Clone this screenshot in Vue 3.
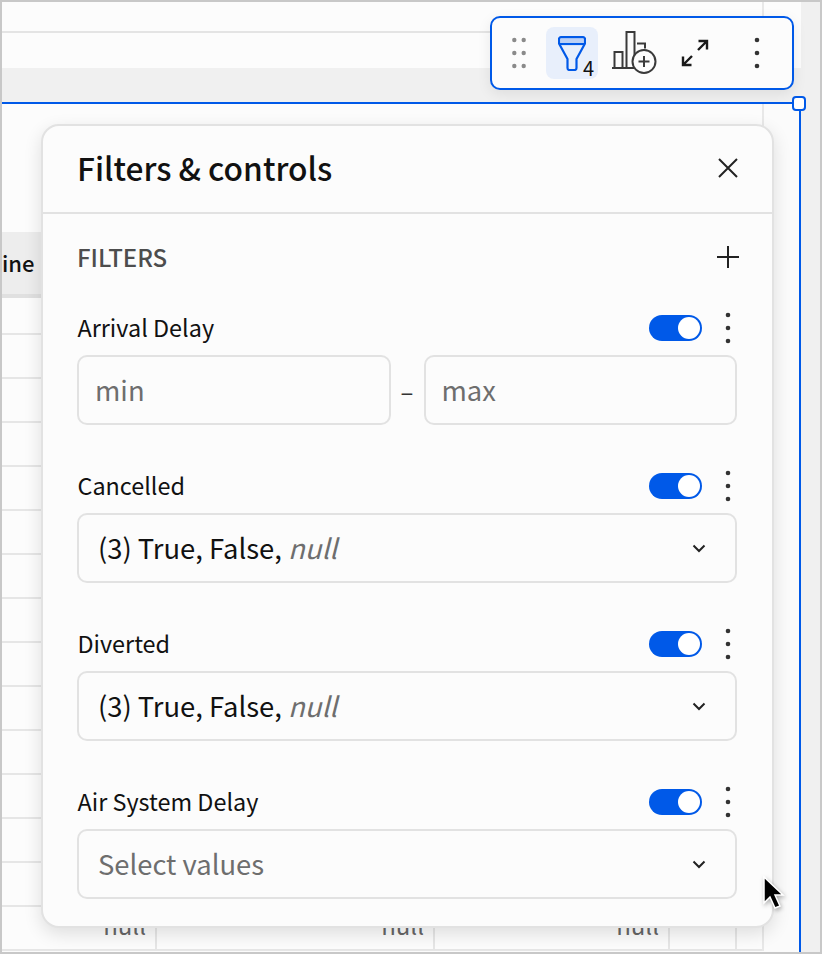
<script setup>
const filters = [
  { name: 'Cancelled', values: '(3) True, False,', nul: 'null' },
  { name: 'Diverted', values: '(3) True, False,', nul: 'null' },
  { name: 'Air System Delay', placeholder: 'Select values' },
]
const rows = Array.from({ length: 14 })
</script>

<template>
  <div class="page">
    <div class="main">
      <div class="top-strip">
        <div class="top-row"></div>
        <div class="top-row2"></div>
        <div class="top-band"></div>
      </div>
      <div class="table">
        <div class="rows">
          <div class="spacer"></div>
          <div class="head"><span>ine</span></div>
          <div v-for="(r, i) in rows" :key="i" class="row" :class="{ first: i == 0 }">
            <span class="cell c1"></span>
            <span class="cell c2"></span>
            <span class="cell c3"></span>
            <span class="cell c4"></span>
          </div>
          <div class="row last">
            <span class="cell c1">null</span>
            <span class="cell c2">null</span>
            <span class="cell c3">null</span>
            <span class="cell c4"></span>
          </div>
        </div>
      </div>
    </div>
    <div class="gutter"></div>

    <span class="handle"></span>

    <div class="toolbar">
      <svg class="drag" width="16" height="32" viewBox="0 0 16 32">
        <g fill="#8a8a8a">
          <circle cx="3.3" cy="3" r="2.2" /><circle cx="12.7" cy="3" r="2.2" />
          <circle cx="3.3" cy="16" r="2.2" /><circle cx="12.7" cy="16" r="2.2" />
          <circle cx="3.3" cy="29" r="2.2" /><circle cx="12.7" cy="29" r="2.2" />
        </g>
      </svg>
      <div class="tool active">
        <svg width="28" height="35" viewBox="0 0 28 35" fill="none" stroke="#0059e8" stroke-width="2.2" stroke-linejoin="round">
          <path d="M2.2 4.6h23.6" stroke="#bcd0f5" stroke-width="4" />
          <path d="M3 1.1h22a2 2 0 0 1 2 2V7.5L18.5 23v9a2 2 0 0 1-2 2h-5a2 2 0 0 1-2-2V23L1 7.5V3.1a2 2 0 0 1 2-2z" />
          <path d="M1.5 8h25" />
        </svg>
        <span class="count">4</span>
      </div>
      <svg class="chart" width="46" height="44" viewBox="0 0 46 44" fill="none" stroke="#3a3a3a" stroke-width="2">
        <path d="M0 37h22" />
        <path d="M2.5 37V21h8v16M14.5 37V1h8v36" />
        <path d="M25 12.5h8v5" />
        <circle cx="32" cy="30.5" r="11.5" fill="#fcfcfc" />
        <path d="M26.5 30.5h11M32 25v11" />
      </svg>
      <svg class="expand" width="28" height="28" viewBox="0 0 28 28" fill="none" stroke="#1a1a1a" stroke-width="2.4">
        <path d="M17 11l9-9M17.5 2H26v8.5" />
        <path d="M11 17l-9 9M2 17.5V26h8.5" />
      </svg>
      <svg class="more" width="6" height="32" viewBox="0 0 6 32" fill="#333">
        <circle cx="3" cy="3" r="2.3" /><circle cx="3" cy="16" r="2.3" /><circle cx="3" cy="29" r="2.3" />
      </svg>
    </div>

    <div class="panel">
      <div class="panel-head">
        <h1>Filters &amp; controls</h1>
        <svg width="20" height="20" viewBox="0 0 20 20" fill="none" stroke="#222" stroke-width="2">
          <path d="M1 1l18 18M19 1L1 19" />
        </svg>
      </div>
      <div class="panel-body">
        <div class="section-head">
          <span>FILTERS</span>
          <svg width="22" height="22" viewBox="0 0 22 22" fill="none" stroke="#222" stroke-width="2">
            <path d="M0 11h22M11 0v22" />
          </svg>
        </div>

        <div class="filter">
          <div class="filter-head">
            <span class="label">Arrival Delay</span>
            <span class="switch"><i></i></span>
            <svg class="more-sm" width="6" height="32" viewBox="0 0 6 32" fill="#333">
              <circle cx="3" cy="3" r="2.3" /><circle cx="3" cy="16" r="2.3" /><circle cx="3" cy="29" r="2.3" />
            </svg>
          </div>
          <div class="range">
            <div class="field ph"><span>min</span></div>
            <span class="dash">–</span>
            <div class="field ph"><span>max</span></div>
          </div>
        </div>

        <div v-for="f in filters" :key="f.name" class="filter">
          <div class="filter-head">
            <span class="label">{{ f.name }}</span>
            <span class="switch"><i></i></span>
            <svg class="more-sm" width="6" height="32" viewBox="0 0 6 32" fill="#333">
              <circle cx="3" cy="3" r="2.3" /><circle cx="3" cy="16" r="2.3" /><circle cx="3" cy="29" r="2.3" />
            </svg>
          </div>
          <div class="field select">
            <span v-if="f.placeholder" class="ph">{{ f.placeholder }}</span>
            <span v-else>{{ f.values }} <em>{{ f.nul }}</em></span>
            <svg width="14" height="9" viewBox="0 0 14 9" fill="none" stroke="#222" stroke-width="2">
              <path d="M1.5 1.5L7 7l5.5-5.5" />
            </svg>
          </div>
        </div>
      </div>
    </div>

    <svg class="cursor" width="24" height="38" viewBox="0 0 24 38">
      <path d="M3 2v26l6-6 5 11 5-2-5-11h8z" fill="#000" stroke="#fff" stroke-width="1.5" />
    </svg>
  </div>
</template>

<style>
html, body { margin: 0; background: #c8c8c8; }
</style>

<style scoped>
.page {
  position: relative;
  width: 822px;
  height: 954px;
  box-sizing: border-box;
  border: 2px solid #c8c8c8;
  background: #fcfcfc;
  overflow: hidden;
  display: flex;
  font-family: "Noto Sans CJK SC", "Noto Sans", sans-serif;
  color: #111;
}
.main { width: 799px; }
.gutter { flex: 1; background: #f0f0f0; }
.top-strip { height: 100px; }
.top-row {
  width: 760px;
  height: 29px;
  border-bottom: 2px solid #e4e4e4;
  border-right: 2px solid #e8e8e8;
}
.top-row2 { width: 760px; height: 35px; border-right: 2px solid #e8e8e8; }
.top-band { height: 34px; background: #f0f0f0; }
.table {
  height: 850px;
  box-sizing: border-box;
  border-top: 2px solid #0059e8;
  border-right: 2px solid #0059e8;
  background: #fbfbfb;
}
.rows { width: 760px; background: #fcfcfc; border-right: 2px solid #e8e8e8; }
.spacer { height: 128px; }
.head {
  height: 62px;
  background: #ededed;
  border-bottom: 4px solid #e0e0e0;
  font-size: 22px;
  font-weight: 500;
  line-height: 60px;
  overflow: hidden;
}
.row {
  height: 42px;
  display: flex;
  border-bottom: 2px solid #e6e6e6;
}
.row.first { height: 35px; }
.cell {
  box-sizing: border-box;
  text-align: right;
  color: #666;
  font-size: 24px;
  padding-right: 9px;
  line-height: 36px;
  border-right: 2px solid #e6e6e6;
}
.c1 { width: 155px; }
.c2 { width: 278px; }
.c3 { width: 235px; }
.c4 { width: 67px; }
.handle {
  position: absolute;
  left: 790px;
  top: 94px;
  width: 14px;
  height: 15px;
  box-sizing: border-box;
  background: #fff;
  border: 2px solid #0059e8;
  border-radius: 4px;
}
.toolbar {
  position: absolute;
  left: 488px;
  top: 14px;
  width: 304px;
  height: 74px;
  box-sizing: border-box;
  background: #fcfcfc;
  border: 2px solid #0059e8;
  border-radius: 10px;
  box-shadow: 0 4px 14px rgba(0, 0, 0, 0.08);
  display: flex;
  align-items: center;
  padding-left: 19px;
}
.tool {
  width: 52px;
  height: 52px;
  margin-left: 19px;
  border-radius: 8px;
  background: #e8effb;
  position: relative;
  display: flex;
  padding: 9px 0 0 12px;
  box-sizing: border-box;
}
.count {
  position: absolute;
  left: 37px;
  top: 29px;
  font-size: 20px;
  line-height: 24px;
}
.chart { margin-left: 14px; }
.expand { margin-left: 23px; }
.more { margin-left: 45px; }
.panel {
  position: absolute;
  left: 39px;
  top: 122px;
  width: 733px;
  height: 804px;
  box-sizing: border-box;
  background: #fcfcfc;
  border: 2px solid #e2e2e2;
  border-radius: 18px;
  box-shadow: 0 6px 18px rgba(0, 0, 0, 0.12);
}
.panel-head {
  height: 86px;
  border-bottom: 2px solid #e2e2e2;
  display: flex;
  align-items: center;
  justify-content: space-between;
  padding: 0 34px 0 34px;
}
.panel-head svg { margin-top: -2px; }
h1 {
  margin: 0 0 2px;
  font-size: 31.7px;
  font-weight: 500;
  line-height: 1;
}
.panel-body { padding: 0 35px 0 34px; }
.section-head {
  height: 85px;
  display: flex;
  align-items: center;
  justify-content: space-between;
  font-size: 24px;
  font-weight: 500;
  color: #4d4d4d;
  margin-right: -2px;
}
.filter { margin-bottom: 32px; }
.filter-head {
  height: 56px;
  display: flex;
  align-items: center;
}
.label { font-size: 23.4px; flex: 1; padding-left: 0.5px; }
.switch {
  width: 53px;
  height: 26px;
  margin-top: 2px;
  border-radius: 13px;
  background: #0059e8;
  position: relative;
  margin-right: 23px;
}
.switch i {
  position: absolute;
  right: 2px;
  top: 2px;
  width: 22px;
  height: 22px;
  border-radius: 50%;
  background: #fff;
}
.more-sm { margin-right: 6px; margin-top: 2px; }
.range { display: flex; align-items: center; }
.field {
  height: 70px;
  box-sizing: border-box;
  border: 2px solid #e2e2e2;
  border-radius: 10px;
  display: flex;
  align-items: center;
  font-size: 27.4px;
}
.field span { padding-bottom: 3px; }
.range .field { flex: 1; padding-left: 16px; }
.dash { width: 33px; text-align: center; font-size: 24px; color: #333; }
.ph { color: #6e6e6e; }
.select {
  justify-content: space-between;
  padding: 0 29px 0 19px;
}
em { color: #6e6e6e; font-style: italic; }
.cursor {
  position: absolute;
  left: 759px;
  top: 873px;
  filter: drop-shadow(1px 2px 2px rgba(0, 0, 0, 0.3));
}
</style>
